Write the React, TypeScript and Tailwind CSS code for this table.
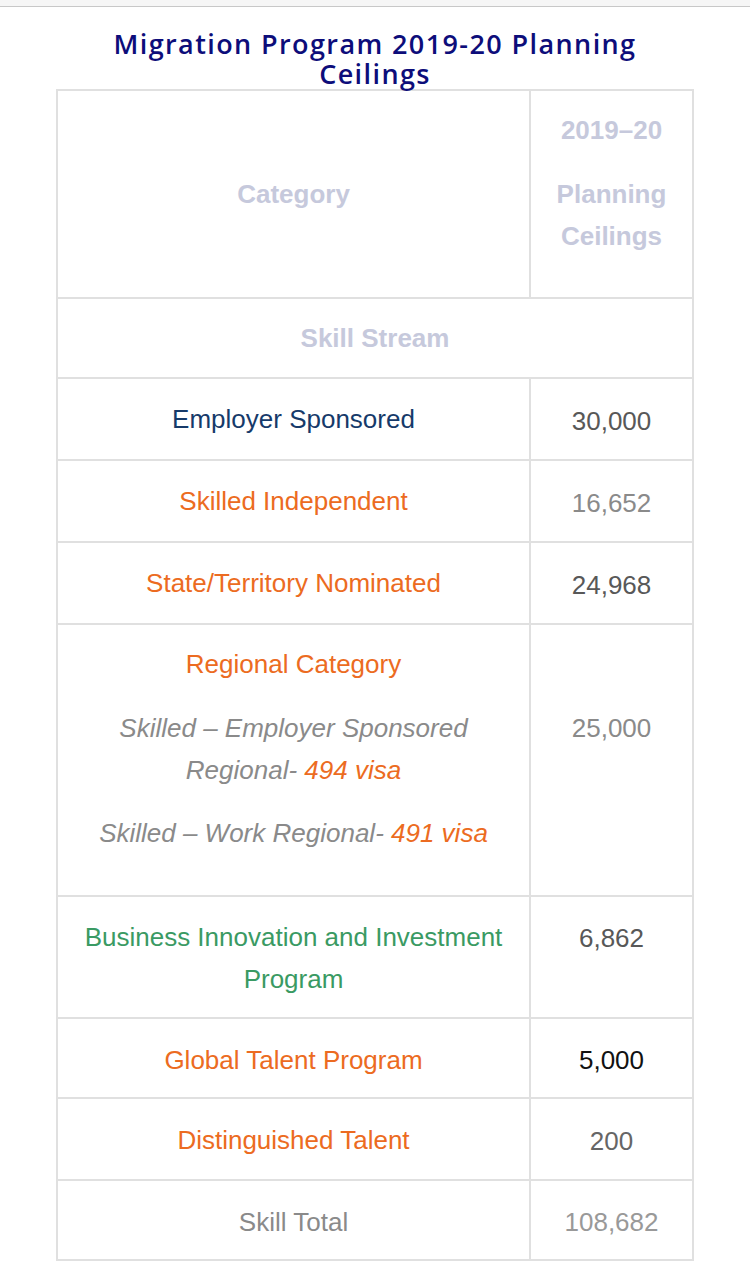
import React from "react";

const body = { fontFamily: '"Liberation Sans", Arial, sans-serif' };

export default function App() {
  return (
    <div className="min-h-screen bg-white" style={body}>
      <div className="h-[7px] bg-[#f6f6f6] border-b border-[#c8c8c8]" />
      <h1
        className="mt-[22px] text-center text-[27px] leading-[30px] font-semibold text-[#0d0d7a] tracking-[1.4px]"
        style={{ fontFamily: '"Open Sans", "Noto Sans", sans-serif' }}
      >
        Migration Program 2019-20 Planning
        <br />
        Ceilings
      </h1>

      <div className="ml-[56px] w-[638px] border-2 border-b-0 border-[#e0e0e0] text-[26px] leading-[42px]">
        {/* Header */}
        <div className="flex h-[208px] border-b-2 border-[#e0e0e0] font-bold text-[#c6c9dc]">
          <div className="w-[473px] border-r-2 border-[#e0e0e0] flex items-center justify-center">
            Category
          </div>
          <div className="flex-1 pt-[18px] text-center">
            <div>2019–20</div>
            <div className="mt-[22px]">Planning</div>
            <div>Ceilings</div>
          </div>
        </div>

        {/* Skill Stream */}
        <div className="flex h-[80px] border-b-2 border-[#e0e0e0] items-center justify-center font-bold text-[#c6c9dc]">
          Skill Stream
        </div>

        {/* Employer Sponsored */}
        <div className="flex h-[82px] border-b-2 border-[#e0e0e0]">
          <div className="w-[473px] border-r-2 border-[#e0e0e0] pt-[19px] text-center text-[#163a6a]">
            Employer Sponsored
          </div>
          <div className="flex-1 pt-[21px] text-center text-[#585858]">30,000</div>
        </div>

        {/* Skilled Independent */}
        <div className="flex h-[82px] border-b-2 border-[#e0e0e0]">
          <div className="w-[473px] border-r-2 border-[#e0e0e0] pt-[19px] text-center text-[#ec6b21]">
            Skilled Independent
          </div>
          <div className="flex-1 pt-[21px] text-center text-[#8a8a8a]">16,652</div>
        </div>

        {/* State/Territory */}
        <div className="flex h-[82px] border-b-2 border-[#e0e0e0]">
          <div className="w-[473px] border-r-2 border-[#e0e0e0] pt-[19px] text-center text-[#ec6b21]">
            State/Territory Nominated
          </div>
          <div className="flex-1 pt-[21px] text-center text-[#585858]">24,968</div>
        </div>

        {/* Regional */}
        <div className="flex h-[272px] border-b-2 border-[#e0e0e0]">
          <div className="w-[473px] border-r-2 border-[#e0e0e0] pt-[18px] text-center">
            <div className="text-[#ec6b21]">Regional Category</div>
            <div className="mt-[22px] italic text-[#8a8a8a]">
              Skilled – Employer Sponsored
              <br />
              Regional- <span className="text-[#ec6b21]">494 visa</span>
            </div>
            <div className="mt-[21px] italic text-[#8a8a8a]">
              Skilled – Work Regional- <span className="text-[#ec6b21]">491 visa</span>
            </div>
          </div>
          <div className="flex-1 pt-[82px] text-center text-[#8a8a8a]">25,000</div>
        </div>

        {/* Business */}
        <div className="flex h-[122px] border-b-2 border-[#e0e0e0]">
          <div className="w-[473px] border-r-2 border-[#e0e0e0] pt-[19px] text-center text-[#3a9a63]">
            Business Innovation and Investment
            <br />
            Program
          </div>
          <div className="flex-1 pt-[20px] text-center text-[#585858]">6,862</div>
        </div>

        {/* Global Talent */}
        <div className="flex h-[80px] border-b-2 border-[#e0e0e0]">
          <div className="w-[473px] border-r-2 border-[#e0e0e0] pt-[20px] text-center text-[#ec6b21]">
            Global Talent Program
          </div>
          <div className="flex-1 pt-[20px] text-center text-[#111111]">5,000</div>
        </div>

        {/* Distinguished */}
        <div className="flex h-[82px] border-b-2 border-[#e0e0e0]">
          <div className="w-[473px] border-r-2 border-[#e0e0e0] pt-[20px] text-center text-[#ec6b21]">
            Distinguished Talent
          </div>
          <div className="flex-1 pt-[21px] text-center text-[#666666]">200</div>
        </div>

        {/* Skill Total */}
        <div className="flex h-[80px] border-b-2 border-[#e0e0e0]">
          <div className="w-[473px] border-r-2 border-[#e0e0e0] pt-[20px] text-center text-[#8a8a8a]">
            Skill Total
          </div>
          <div className="flex-1 pt-[20px] text-center text-[#999999]">108,682</div>
        </div>
      </div>
    </div>
  );
}
